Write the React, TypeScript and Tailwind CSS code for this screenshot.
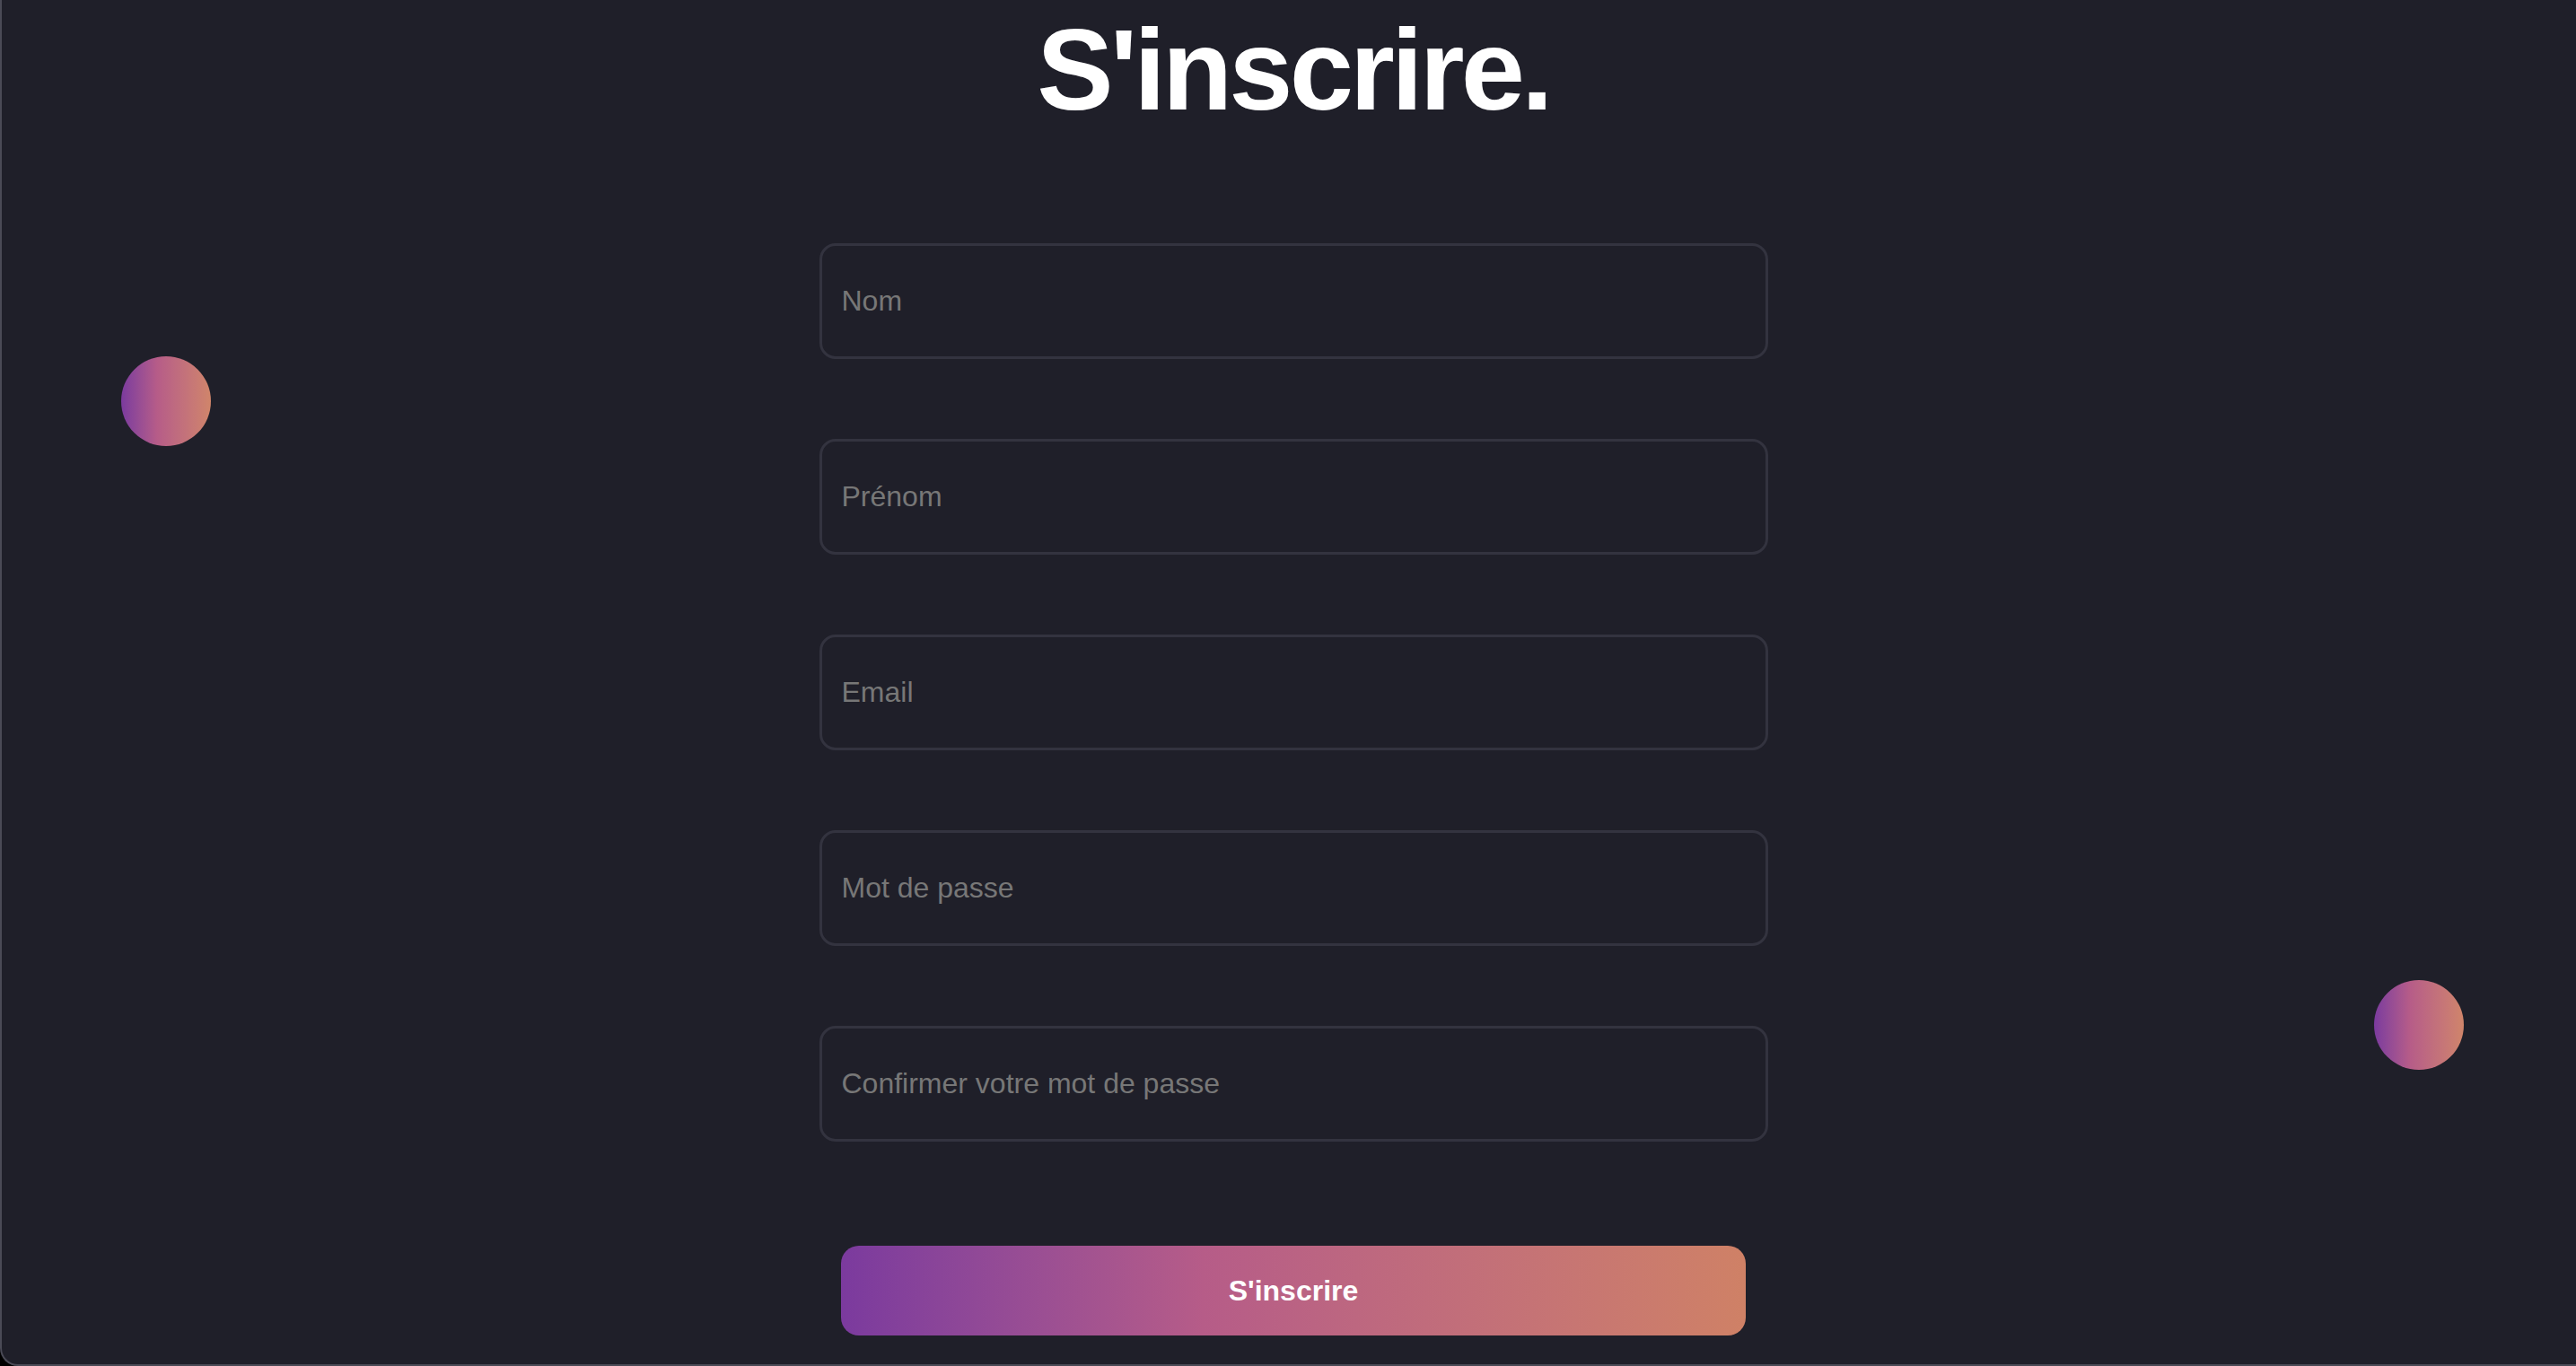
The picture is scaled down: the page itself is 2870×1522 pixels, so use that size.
import React from "react";

const fields = ["Nom", "Prénom", "Email", "Mot de passe", "Confirmer votre mot de passe"];

export default function App() {
  return (
    <div
      className="w-[2870px] h-[1522px] overflow-hidden bg-black"
      style={{ fontFamily: '"Liberation Sans", Arial, Helvetica, sans-serif' }}
    >
      <div className="relative w-[2880px] h-[1522px] bg-[#1f1f29] border-l-2 border-b-2 border-[#4a4a56] rounded-bl-[20px] flex flex-col items-center">
        <div className="absolute left-[133px] top-[397px] w-[100px] h-[100px] rounded-full bg-gradient-to-r from-[#7b3a9e] via-[#b65c88] via-40% to-[#d0856a]" />
        <div className="absolute left-[2643px] top-[1092px] w-[100px] h-[100px] rounded-full bg-gradient-to-r from-[#7b3a9e] via-[#b65c88] via-40% to-[#d0856a]" />

        <h1 className="mt-[14px] text-[128px] leading-none font-bold text-white tracking-[-0.03em]">
          S'inscrire.
        </h1>

        <form className="mt-[129px] flex flex-col items-center">
          <div className="flex flex-col gap-[89px]">
            {fields.map((f) => (
              <input
                key={f}
                type="text"
                placeholder={f}
                className="w-[1057px] h-[129px] rounded-[18px] border-[3px] border-[#33333f] bg-[#1f1f29] pl-[22px] text-[32px] text-white placeholder:text-[#777777] outline-none"
              />
            ))}
          </div>
          <button
            type="button"
            className="mt-[116px] w-[1008px] h-[100px] rounded-[20px] bg-gradient-to-r from-[#7b3a9e] via-[#b65c88] via-40% to-[#cf8166] text-white text-[32px] font-bold"
          >
            S'inscrire
          </button>
        </form>
      </div>
    </div>
  );
}
